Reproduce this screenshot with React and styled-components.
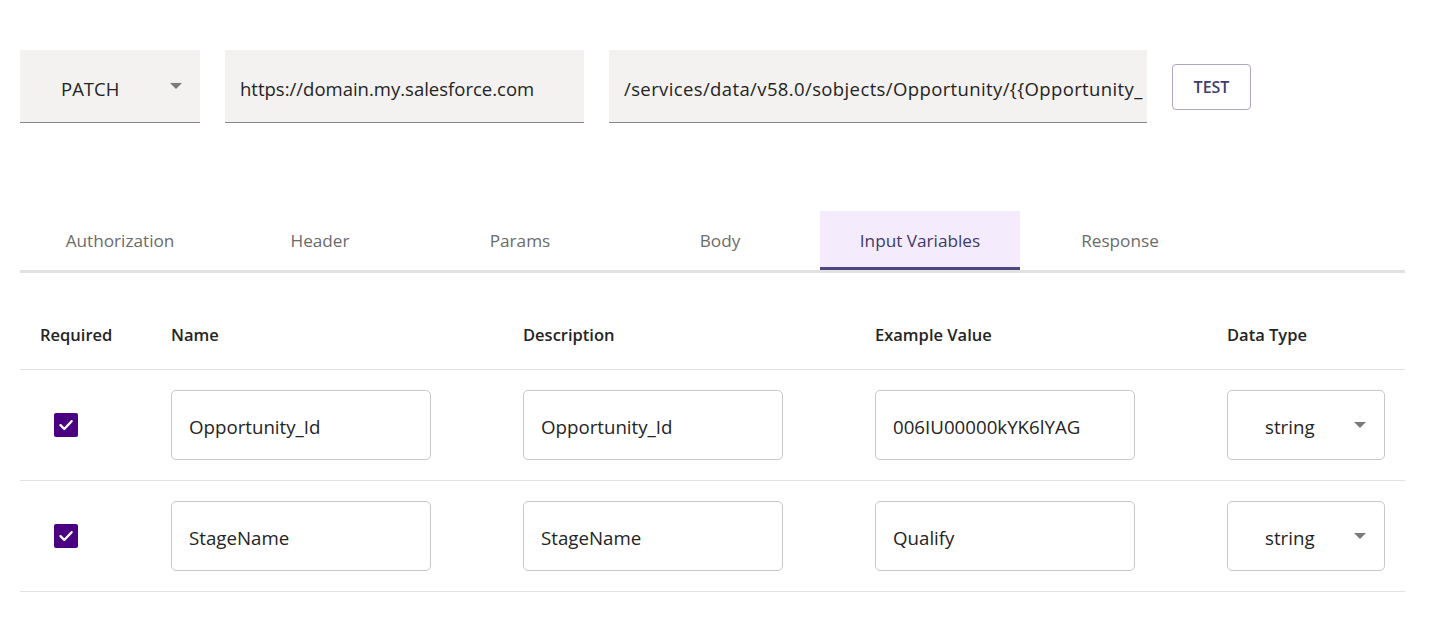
import React from "react";
import styled, { createGlobalStyle } from "styled-components";

const Global = createGlobalStyle`
  html, body { margin: 0; padding: 0; background: #fff; }
  body { font-family: "Open Sans", "Noto Sans", sans-serif; color: #242424; }
  * { box-sizing: border-box; }
`;

const Page = styled.div`
  padding: 50px 40px 0 20px;
  width: 1445px;
`;

const Toolbar = styled.div`
  display: flex;
  align-items: center;
  gap: 25px;
  height: 73px;
`;

const Field = styled.div`
  width: ${(p) => p.$w}px;
  flex: none;
  height: 73px;
  background: #f3f2f1;
  border-bottom: 1px solid #8a8886;
  display: flex;
  align-items: center;
  padding-left: ${(p) => p.$pl ?? 15}px;
  padding-top: 4px;
  font-size: 18.5px;
  letter-spacing: ${(p) => p.$ls ?? 0}px;
  color: #242424;
  white-space: nowrap;
  overflow: hidden;
  position: relative;
`;

const Caret = styled.span`
  position: absolute;
  right: ${(p) => p.$right}px;
  top: 50%;
  margin-top: -3px;
  width: 0;
  height: 0;
  border-left: 6px solid transparent;
  border-right: 6px solid transparent;
  border-top: 6px solid #7a7a7a;
`;

const TestButton = styled.button`
  width: 79px;
  height: 46px;
  flex: none;
  background: #fff;
  border: 1px solid #a9a7c4;
  border-radius: 4px;
  font-family: inherit;
  font-size: 16px;
  font-weight: 600;
  color: #3f3d6e;
  cursor: pointer;
  padding: 0;
`;

const Tabs = styled.div`
  margin-top: 88px;
  display: flex;
  border-bottom: 3px solid #e1e1e1;
`;

const Tab = styled.div`
  width: 200px;
  height: 59px;
  display: flex;
  align-items: center;
  justify-content: center;
  font-size: 17.2px;
  color: ${(p) => (p.$active ? "#3d3a6b" : "#6b6b6b")};
  font-weight: ${(p) => (p.$active ? 500 : 400)};
  background: ${(p) => (p.$active ? "#f4ebfd" : "transparent")};
  border-bottom: 3px solid ${(p) => (p.$active ? "#4e4680" : "transparent")};
  padding-top: 3px;
`;

const Table = styled.div`
  margin-top: 27px;
  display: grid;
  grid-template-columns: 131px 352px 352px 352px 198px;
`;

const HeadCell = styled.div`
  height: 70px;
  display: flex;
  align-items: center;
  padding-left: 20px;
  font-size: 16.5px;
  font-weight: 600;
  color: #242424;
  border-bottom: 1px solid #e1e1e1;
`;

const Cell = styled.div`
  height: 111px;
  display: flex;
  align-items: center;
  padding: 0 20px;
  border-bottom: 1px solid #e1e1e1;
  padding-left: ${(p) => p.$pl ?? 20}px;
`;

const TextBox = styled.div`
  width: 260px;
  height: 70px;
  border: 1px solid #c8c8c8;
  border-radius: 5px;
  display: flex;
  align-items: center;
  padding-left: 17px;
  padding-top: 3px;
  font-size: 18.7px;
  color: #242424;
  white-space: nowrap;
`;

const SelectBox = styled(TextBox)`
  width: 158px;
  padding-left: 37px;
  position: relative;
`;

const Check = styled.span`
  width: 24px;
  height: 24px;
  border-radius: 2px;
  background: #4b0082;
  display: inline-flex;
  align-items: center;
  justify-content: center;
`;

const CheckMark = () => (
  <svg width="18" height="18" viewBox="0 0 18 18">
    <path d="M3.5 9.2 L7.3 13 L14.6 5.2" fill="none" stroke="#fff" strokeWidth="2.4" strokeLinecap="round" strokeLinejoin="round" />
  </svg>
);

const tabs = ["Authorization", "Header", "Params", "Body", "Input Variables", "Response"];
const rows = [
  { name: "Opportunity_Id", desc: "Opportunity_Id", ex: "006IU00000kYK6lYAG", type: "string" },
  { name: "StageName", desc: "StageName", ex: "Qualify", type: "string" },
];

export default function App() {
  return (
    <>
      <Global />
      <Page>
        <Toolbar>
          <Field $w={180} $pl={41}>
            PATCH
            <Caret $right={18} />
          </Field>
          <Field $w={359}>https://domain.my.salesforce.com</Field>
          <Field $w={538} $ls={0.38}>/services/data/v58.0/sobjects/Opportunity/{"{{"}Opportunity_</Field>
          <TestButton>TEST</TestButton>
        </Toolbar>
        <Tabs>
          {tabs.map((t) => (
            <Tab key={t} $active={t === "Input Variables"}>{t}</Tab>
          ))}
        </Tabs>
        <Table>
          <HeadCell>Required</HeadCell>
          <HeadCell>Name</HeadCell>
          <HeadCell>Description</HeadCell>
          <HeadCell>Example Value</HeadCell>
          <HeadCell>Data Type</HeadCell>
          {rows.map((r) => (
            <React.Fragment key={r.name}>
              <Cell $pl={34}>
                <Check><CheckMark /></Check>
              </Cell>
              <Cell><TextBox>{r.name}</TextBox></Cell>
              <Cell><TextBox>{r.desc}</TextBox></Cell>
              <Cell><TextBox>{r.ex}</TextBox></Cell>
              <Cell>
                <SelectBox>
                  {r.type}
                  <Caret $right={18} />
                </SelectBox>
              </Cell>
            </React.Fragment>
          ))}
        </Table>
      </Page>
    </>
  );
}
